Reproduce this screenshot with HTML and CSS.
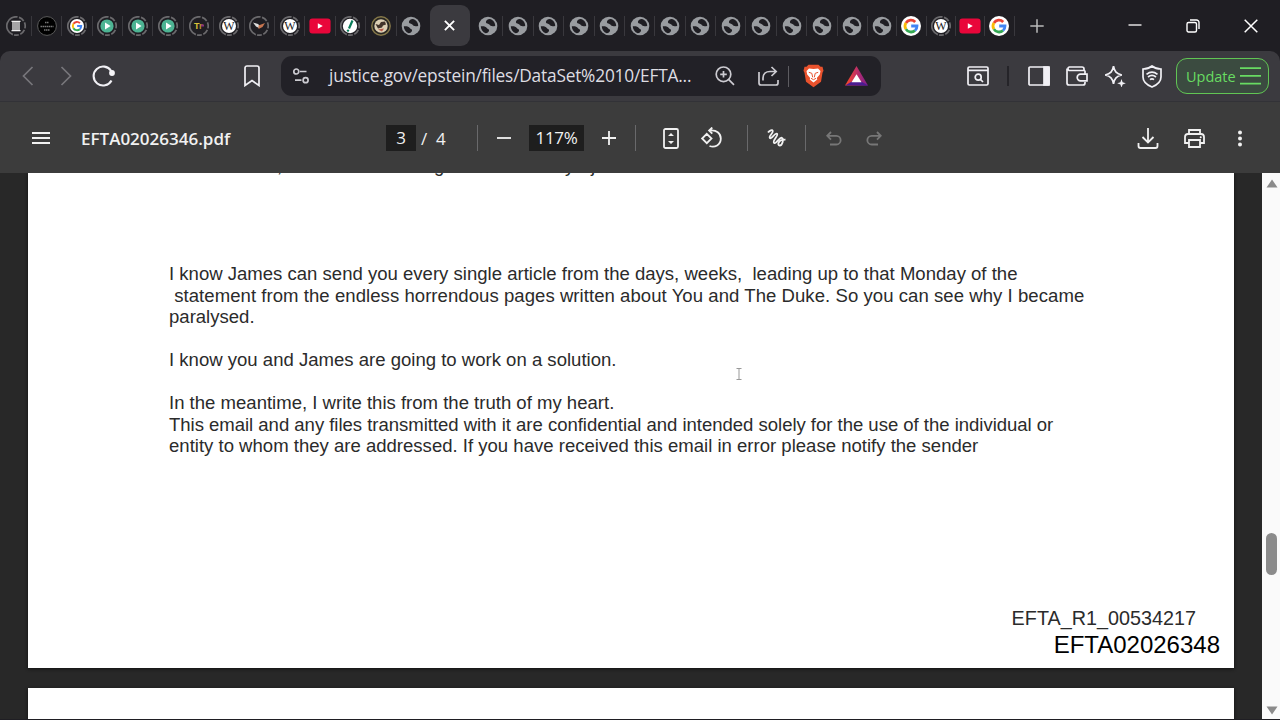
FILE: index.html
```html
<!DOCTYPE html>
<html lang="en">
<head>
    <meta charset="utf-8">
    <title>EFTA02026346.pdf</title>
    <link rel="stylesheet" href="styles.css">
</head>
<body>

<!-- shared favicons -->
<svg class="defs" width="0" height="0">
    <defs>
        <linearGradient id="bat" x1="0" y1="0" x2="1" y2="0"><stop offset="0" stop-color="#ff4b20"/><stop offset=".45" stop-color="#c8325f"/><stop offset="1" stop-color="#7a1d93"/></linearGradient>
    </defs>
    <symbol id="globe" viewBox="0 0 20 20">
        <circle cx="10" cy="10" r="9.3" fill="#999ca0"/>
        <path d="M2.800 10.300c3-.4 5 .3 6 1.700.9 1.300 2.700.9 2.200 2.700-.4 1.400-1.600 2.300-3.300 2.600C4.800 16.300 2.800 13.500 2.800 10.300zM11.700 3c-2 .1-3.200 1.300-3.700 2.500-.5 1.600 1 2 2.500 2.400 1.500.6 1.500 1.900 3 2.200 1.500.3 2.200-.2 3.700-.2C17.200 6.200 14.700 3.500 11.700 3z" fill="#1f1e23"/>
    </symbol>
    <symbol id="ring" viewBox="0 0 20 20">
        <circle cx="10" cy="10" r="9.2" fill="none" stroke="#6b6a6d" stroke-width="1.700" stroke-dasharray="27 1.600 6 1.600 6 1.600 6 1.600 4.800 1.600" transform="rotate(110 10 10)"/>
    </symbol>
    <symbol id="google" viewBox="0 0 20 20">
        <circle cx="10" cy="10" r="10" fill="#fff"/>
        <g fill="none" stroke-width="2.800">
            <path d="M14.200 5.900A6 6 0 0 0 4.900 6.900" stroke="#ea4335"/>
            <path d="M4.900 6.900a6 6 0 0 0 0 6.200" stroke="#fbbc05"/>
            <path d="M4.900 13.100a6 6 0 0 0 9.100 1.400" stroke="#34a853"/>
            <path d="M14 14.500A6 6 0 0 0 16 10H10.200" stroke="#4285f4"/>
        </g>
    </symbol>
    <symbol id="play" viewBox="0 0 20 20">
        <use href="#ring"/><circle cx="10" cy="10" r="6.600" fill="#4db493"/><path d="M8 6.600v6.800l5.600-3.400z" fill="#fff"/>
    </symbol>
    <symbol id="youtube" viewBox="0 0 22 20">
        <rect x=".4" y="2.500" width="21.200" height="15" rx="3" fill="#e9063a"/><path d="M8.800 7.200v5.600l5-2.800z" fill="#fff"/>
    </symbol>
</svg>

<div class="tabs">
    <div class="tab"><svg viewBox="0 0 20 20"><use href="#ring"/><path d="M5.500 5.300h9M5.500 14.700h9M7 6v8.500M9 6v8.500M11 6v8.500M13 6v8.500" stroke="#eee" stroke-width="1.300"/></svg></div>
    <div class="tab"><svg viewBox="0 0 20 20"><circle cx="10" cy="10" r="9.400" fill="#000" stroke="#5b5b5b"/><path d="M3.500 10.500h13M8 6.500h4M7 14h6" stroke="#777" stroke-width="1.500" stroke-dasharray="1.500 .5"/></svg></div>
    <div class="tab"><svg viewBox="0 0 20 20"><use href="#ring"/><use href="#google" x="3" y="3" width="14" height="14"/></svg></div>
    <div class="tab"><svg><use href="#play"/></svg></div>
    <div class="tab"><svg><use href="#play"/></svg></div>
    <div class="tab"><svg><use href="#play"/></svg></div>
    <div class="tab"><svg viewBox="0 0 20 20"><use href="#ring"/><text x="5" y="13" class="tr">T<tspan fill="#b99532">r</tspan></text><path d="M12 9.500h3" stroke="#8b337c" stroke-width="2"/></svg></div>
    <div class="tab"><svg viewBox="0 0 20 20"><use href="#ring"/><circle cx="10" cy="10" r="7" fill="#fff"/><text x="10" y="13.800" text-anchor="middle" class="wiki-w">W</text></svg></div>
    <div class="tab"><svg viewBox="0 0 20 20"><use href="#ring"/><path d="M4 6.500l5 1.500 2 2-1 2-3-1.500z" fill="#ddd"/><path d="M9.500 9.500L16 7l-2.500 4-4 2z" fill="#c7754f"/></svg></div>
    <div class="tab"><svg viewBox="0 0 20 20"><use href="#ring"/><circle cx="10" cy="10" r="7" fill="#fff"/><text x="10" y="13.800" text-anchor="middle" class="wiki-w">W</text></svg></div>
    <div class="tab"><svg class="yt"><use href="#youtube"/></svg></div>
    <div class="tab"><svg viewBox="0 0 20 20"><use href="#ring"/><circle cx="10" cy="10" r="7.200" fill="#fff"/><path d="M12.500 4.500L9 12.500" stroke="#087c59" stroke-width="2.200"/><circle cx="8" cy="14.600" r="1.200" fill="#087c59"/></svg></div>
    <div class="tab"><svg viewBox="0 0 20 20"><circle cx="10" cy="10" r="9.200" fill="#292722" stroke="#86794a" stroke-width="1.400"/><circle cx="10" cy="10" r="6.700" fill="#ddd0b5"/><path d="M4.500 8l3.500 1 2-3 4-.5 1 3-3 1-1 2-4 1z" fill="#42342b"/><path d="M7 13.500l6-1-2 3z" fill="#b85b48"/></svg></div>
    <div class="tab last"><svg><use href="#globe"/></svg></div>
    <div class="tab-active"><svg viewBox="0 0 10 10"><path d="M.8.8l8.400 8.400M9.200.8L.8 9.200" stroke="#fff" stroke-width="1.700"/></svg></div>
    <div class="tab"><svg><use href="#globe"/></svg></div>
    <div class="tab"><svg><use href="#globe"/></svg></div>
    <div class="tab"><svg><use href="#globe"/></svg></div>
    <div class="tab"><svg><use href="#globe"/></svg></div>
    <div class="tab"><svg><use href="#globe"/></svg></div>
    <div class="tab"><svg><use href="#globe"/></svg></div>
    <div class="tab"><svg><use href="#globe"/></svg></div>
    <div class="tab"><svg><use href="#globe"/></svg></div>
    <div class="tab"><svg><use href="#globe"/></svg></div>
    <div class="tab"><svg><use href="#globe"/></svg></div>
    <div class="tab"><svg><use href="#globe"/></svg></div>
    <div class="tab"><svg><use href="#globe"/></svg></div>
    <div class="tab"><svg><use href="#globe"/></svg></div>
    <div class="tab narrow"><svg><use href="#globe"/></svg></div>
    <div class="tab narrow"><svg><use href="#google"/></svg></div>
    <div class="tab narrow"><svg viewBox="0 0 20 20"><use href="#ring"/><circle cx="10" cy="10" r="7" fill="#fff"/><text x="10" y="13.800" text-anchor="middle" class="wiki-w">W</text></svg></div>
    <div class="tab narrow"><svg class="yt"><use href="#youtube"/></svg></div>
    <div class="tab narrow"><svg><use href="#google"/></svg></div>
    <svg class="newtab" viewBox="0 0 14 14"><path d="M7 .3v13.400M.3 7h13.400" stroke="#bbb" stroke-width="1.500"/></svg>
    <div class="window">
        <svg viewBox="0 0 14 14"><path d="M.5 6h13" stroke="#fff" stroke-width="1.300"/></svg>
        <svg viewBox="0 0 14 14" fill="none" stroke="#fff" stroke-width="1.400"><rect x="1" y="3.500" width="9.500" height="9.500" rx="1.500"/><path d="M4 1h6.500A2.500 2.500 0 0 1 13 3.500V10"/></svg>
        <svg viewBox="0 0 14 14"><path d="M.7.7l12.600 12.600M13.300.7L.7 13.300" stroke="#fff" stroke-width="1.500"/></svg>
    </div>
</div>

<div class="navbar">
    <div class="nav-buttons">
        <svg class="dim" width="12" height="20" viewBox="0 0 12 20"><path d="M10.500 1L1.500 10l9 9"/></svg>
        <svg class="dim" width="12" height="20" viewBox="0 0 12 20"><path d="M1.500 1l9 9-9 9"/></svg>
        <svg class="reload" width="24" height="22" viewBox="0 0 24 22"><path d="M19.200 6A9.500 9.500 0 1 0 19.500 15.500" stroke-width="2.100"/><circle cx="20" cy="8" r="2.900" fill="#f5f4f8" stroke="none"/></svg>
    </div>
    <svg class="bookmark" width="16" height="22" viewBox="0 0 16 22"><path d="M1 3a2 2 0 0 1 2-2h10a2 2 0 0 1 2 2v17.500l-7-5-7 5z"/></svg>
    <div class="address">
        <svg width="16" height="16" viewBox="0 0 16 16"><circle cx="3.300" cy="3.500" r="2.500"/><path d="M7 3.500h6.500M2 12.200h6.500"/><circle cx="12.600" cy="12.200" r="2.500"/></svg>
        <span class="url">justice.gov/epstein/files/DataSet%2010/EFTA...</span>
        <svg class="zoomicon" width="20" height="20" viewBox="0 0 20 20"><circle cx="8.500" cy="8.300" r="7.300"/><path d="M13.800 13.600L19 18.800M8.500 5v6.600M5.200 8.300h6.600"/></svg>
        <svg class="share" width="21" height="20" viewBox="0 0 21 20"><path d="M1 6v11a2 2 0 0 0 2 2h15a2 2 0 0 0 2-2v-3M5 14.500V12c0-4 3-6.500 7-6.500h6M13.500 1l4.700 4.500-4.700 4.500"/></svg>
        <i></i>
        <svg class="brave" width="21" height="24" viewBox="0 0 21 24"><path d="M5.500.8h10l2 2 2-.1 1 4-1 2-1.500 9-7.500 5.500-7.500-5.500-1.500-9-1-2 1-4 2 .1z" fill="#e9522d" stroke="none"/><path d="M6 4.500l4.500.5L15 4.500l2.500 2.500-.7 3.500-3 3.500.5 1.500-3.800 3-3.800-3 .5-1.500-3-3.500L3.500 7z" fill="#fff" stroke="none"/><path d="M5.800 8.300l3 1 .9 4M15.200 8.300l-3 1-.9 4M8 14.300l2.500 1.400 2.500-1.400" stroke="#e9522d" stroke-width="1"/></svg>
        <svg width="23" height="20" viewBox="0 0 23 20"><path d="M11.500 0L23 19.500H0z" fill="url(#bat)" stroke="none"/><path d="M0 19.500L6.500 15.800h10.300L23 19.500z" fill="#4c1c91" stroke="none"/><path d="M11.500 8.200l5 8h-10z" fill="#fff" stroke="none"/></svg>
    </div>
    <div class="actions">
        <svg width="22" height="20" viewBox="0 0 22 20"><rect x="1" y="1" width="20" height="18" rx="1.300"/><path d="M1 4.300h20M13.500 13.500l2.500 2.500"/><circle cx="11.200" cy="11.200" r="3"/></svg>
        <i></i>
        <svg width="22" height="20" viewBox="0 0 22 20"><rect x="1" y="1" width="20" height="18" rx="1"/><path d="M16 1h5v18h-5z" fill="#f1f0f5"/></svg>
        <svg width="22" height="20" viewBox="0 0 22 20"><path d="M3 1h13a2 2 0 0 1 2 2v1.500M19 4.500H3a2 2 0 0 1 0-3.500M1 2.500V17a2 2 0 0 0 2 2h14a2 2 0 0 0 2-2v-1M21 8.200v6.600h-6.500a3.300 3.300 0 0 1 0-6.600zM19 4.500v3.700"/></svg>
        <svg width="22" height="22" viewBox="0 0 22 22"><path d="M9.500 1.200c1 5.500 2.900 7.500 8.300 8.800-5.400 1.300-7.300 3.300-8.300 8.800C8.500 13.300 6.600 11.300 1.200 10 6.600 8.700 8.500 6.700 9.500 1.200z"/><path d="M17.500 14l1.100 3.200 3.200 1.100-3.200 1.100-1.100 3.200-1.100-3.200-3.200-1.100 3.200-1.100z" fill="#f1f0f5" stroke="none"/></svg>
        <svg width="20" height="23" viewBox="0 0 20 23"><path d="M10 1c2.500 2 5.500 3 9 3v8c0 5-4 8-9 10-5-2-9-5-9-10V4c3.500 0 6.500-1 9-3zM4.500 9.300c3.500-2.700 7.500-2.700 11 0M6 12c2.600-2 5.400-2 8 0M8 14.600c1.300-1 2.700-1 4 0"/></svg>
    </div>
    <div class="update"><span>Update</span><svg width="21" height="18" viewBox="0 0 21 18"><path d="M0 1.200h21M0 8.900h21M0 16.600h21"/></svg></div>
</div>

<div class="pdfbar">
    <svg class="menu" width="18" height="12" viewBox="0 0 18 12"><path d="M0 1h18M0 6h18M0 11h18"/></svg>
    <span class="filename">EFTA02026346.pdf</span>
    <span class="field page-no">3</span>
    <span class="slash">/</span>
    <span class="total">4</span>
    <i class="d1"></i>
    <svg class="minus" width="14" height="14" viewBox="0 0 14 14"><path d="M0 7h14"/></svg>
    <span class="field percent">117%</span>
    <svg class="plus" width="14" height="14" viewBox="0 0 14 14"><path d="M0 7h14M7 0v14"/></svg>
    <i class="d2"></i>
    <svg class="fit" width="16" height="21" viewBox="0 0 16 21"><rect x="1" y="1" width="14" height="19" rx="1.500"/><path d="M5 8l3-3 3 3zM5 13l3 3 3-3z" fill="#f1f1f1" stroke="none"/></svg>
    <svg class="rotate" width="22" height="22" viewBox="0 0 22 22"><path d="M6.800 6.800L11.500 11.500l-4.700 4.700L2.100 11.500zM9.500 3.500c7-1.200 11.300 3 11.300 8 0 6.300-6 9.600-11.300 7.500M12.300.5l-3.200 3 3.200 3.200"/></svg>
    <i class="d3"></i>
    <svg class="draw" width="19" height="18" viewBox="0 0 19 18"><path d="M1 3.600C2.500 1.500 5.500 0 5.800 2.200S1.300 7.500 2.900 9 8 3.300 10 4.800 5 12 7 13.800 12.500 8 14.800 8.800 15.500 16.500 12.700 16.500 11 10.500 18.500 10.700"/></svg>
    <i class="d4"></i>
    <svg class="off undo" width="16" height="15" viewBox="0 0 16 15"><path d="M5 1L1.200 4.800 5 8.600M1.500 4.800h8.800a4.300 4.300 0 0 1 0 8.700H4"/></svg>
    <svg class="off" width="16" height="15" viewBox="0 0 16 15"><path d="M11 1l3.800 3.800L11 8.600M14.500 4.800H5.700a4.300 4.300 0 0 0 0 8.700H12"/></svg>
    <div class="pdf-actions">
        <svg width="22" height="21" viewBox="0 0 22 21"><path d="M11 0v14M5.500 9l5.500 5.500L16.500 9M1.500 15v3a2 2 0 0 0 2 2h15a2 2 0 0 0 2-2v-3"/></svg>
        <svg width="21" height="19" viewBox="0 0 21 19"><path d="M5 5V1h11v4M5 14H1V8a3 3 0 0 1 3-3h13a3 3 0 0 1 3 3v6h-4M5 11h11v7H5z"/><circle cx="16.700" cy="8.300" r="1" fill="#fff" stroke="none"/></svg>
        <svg width="6" height="17" viewBox="0 0 6 17" class="dots"><circle cx="3" cy="2.500" r="2"/><circle cx="3" cy="8.500" r="2"/><circle cx="3" cy="14.500" r="2"/></svg>
    </div>
</div>

<div class="viewer">
    <div class="pages">
        <div class="page">
            <!-- descenders of the line scrolled under the toolbar -->
            <div class="scrolled"><span>,</span><span>g</span><span>y</span><span>j</span></div>
            <div class="mail">
                <p>I know James can send you every single article from the days, weeks,  leading up to that Monday of the
<span class="wide"> statement from the endless horrendous pages written about You and The Duke. So you can see why I became</span>
paralysed.</p>
                <p>I know you and James are going to work on a solution.</p>
                <p>In the meantime, I write this from the truth of my heart.
<span class="tight">This email and any files transmitted with it are confidential and intended solely for the use of the individual or</span>
entity to whom they are addressed. If you have received this email in error please notify the sender</p>
            </div>
            <svg class="cursor" width="6" height="12" viewBox="0 0 6 12"><path d="M.5.5h5M3 .5v11M.5 11.500h5"/></svg>
            <div class="stamps">
                <div class="stamp-old">EFTA_R1_00534217</div>
                <div class="stamp">EFTA02026348</div>
            </div>
        </div>
        <div class="page next"></div>
    </div>
    <div class="scrollbar">
        <svg width="12" height="9" viewBox="0 0 12 9"><path d="M6 0.500L11.500 8.500H.5z" fill="#8b8b8b"/></svg>
        <div class="thumb"></div>
        <svg width="12" height="9" viewBox="0 0 12 9"><path d="M6 8.500L.5.5h11z" fill="#8b8b8b"/></svg>
    </div>
</div>

</body>
</html>
```
FILE: styles.css
```css
*{
    box-sizing: border-box;
}

body{
    margin: 0;
    width: 1280px;
    height: 720px;
    overflow: hidden;
    display: flex;
    flex-direction: column;
    background: #1f1e23;
    color: #f1f1f1;
    font-family: "Open Sans", "Noto Sans", sans-serif;
}

svg{
    flex: none;
    display: block;
}

.defs{
    position: absolute;
}

.wiki-w{
    font: 12px "Liberation Serif", serif;
    fill: #222;
}

.tr{
    font: bold 9px "Liberation Sans", sans-serif;
    fill: #d8c338;
}

/* tab strip */
.tabs{
    height: 51px;
    flex: none;
    display: flex;
    align-items: center;
    padding-left: 1.5px;
}

.tab{
    width: 30.4px;
    height: 20px;
    flex: none;
    display: flex;
    justify-content: center;
    border-right: 1px solid #39383d;
}

.tab.narrow{
    width: 29.3px;
}

.tab.last{
    border-color: transparent;
}

.tab svg{
    width: 20px;
    height: 20px;
}

.tab .yt{
    width: 22px;
}

.tab-active{
    width: 40px;
    height: 41px;
    margin: 0 3px 0 3px;
    flex: none;
    border-radius: 9px;
    background: #3b3a3f;
    display: flex;
    align-items: center;
    justify-content: center;
}

.tab-active svg{
    width: 11px;
    height: 11px;
}

.newtab{
    width: 14px;
    height: 14px;
    margin-left: 15px;
}

.window{
    margin-left: auto;
    padding-right: 22px;
    display: flex;
    gap: 44px;
}

.window svg{
    width: 14px;
    height: 14px;
}

/* navigation */
.navbar{
    height: 51px;
    flex: none;
    display: flex;
    align-items: center;
    background: #3b3a3f;
    border-bottom: 1px solid #323237;
    border-radius: 10px 10px 0 0;
    padding-left: 22px;
}

.navbar svg{
    fill: none;
    stroke: #f1f0f5;
    stroke-width: 1.7;
}

.nav-buttons{
    display: flex;
    align-items: center;
    gap: 26px;
}

.nav-buttons .dim{
    stroke: #77767b;
}

.nav-buttons .reload{
    margin-left: -6px;
}

.bookmark{
    margin-left: 128px;
}

.address{
    width: 600px;
    height: 40px;
    margin-left: 21px;
    padding-left: 12px;
    display: flex;
    align-items: center;
    background: #222127;
    border-radius: 11px;
}

.address svg{
    stroke: #cccbd1;
}

.url{
    width: 366px;
    margin-left: 20px;
    white-space: nowrap;
    font-size: 17.3px;
    letter-spacing: -.2px;
    line-height: 24px;
    color: #dedde2;
}

.share{
    margin-left: 23px;
}

.zoomicon{
    margin-left: 20px;
}

.address i{
    width: 1px;
    height: 21px;
    margin-left: 9px;
    background: #5d5c61;
}

.brave{
    margin: 0 21px 0 14px;
}

.actions{
    display: flex;
    align-items: center;
    margin-left: 86px;
    gap: 16px;
}

.actions i{
    width: 2px;
    height: 20px;
    margin: 0 3px 0 2px;
    background: #252429;
}

.update{
    width: 93px;
    height: 36px;
    margin-left: 14px;
    padding-left: 9px;
    display: flex;
    align-items: center;
    gap: 4px;
    border: 1.5px solid #61c554;
    border-radius: 11px;
    background: #3b4b40;
    color: #68dc62;
    font-size: 14.5px;
}

.update svg{
    stroke: #68dc62;
}

/* pdf toolbar */
.pdfbar{
    height: 71px;
    flex: none;
    display: flex;
    align-items: center;
    padding: 1px 37px 0 32px;
    background: #3c3c3c;
    font-size: 17px;
}

.pdfbar svg{
    fill: none;
    stroke: #f1f1f1;
    stroke-width: 1.8;
}

.pdfbar i{
    width: 1px;
    height: 26px;
    background: #69696b;
}

.filename{
    width: 305px;
    margin-left: 31px;
    font-weight: 600;
}

.field{
    height: 26px;
    line-height: 26px;
    text-align: center;
    background: #1e1e1e;
}

.page-no{
    width: 30px;
}

.slash{
    width: 20px;
    padding-left: 5px;
}

.total{
    width: 12px;
}

.d1{
    margin-left: 29px;
}

.minus{
    margin: 0 18px 0 19px;
}

.percent{
    width: 55px;
    letter-spacing: -.3px;
}

.plus{
    margin-left: 18px;
}

.d2{
    margin-left: 19px;
}

.fit{
    margin-left: 27px;
}

.rotate{
    margin-left: 21px;
}

.d3{
    margin-left: 25px;
}

.draw{
    margin-left: 19px;
}

.d4{
    margin-left: 19px;
}

.undo{
    margin: 0 24px 0 20px;
}

.pdfbar .off{
    stroke: #777;
}

.pdf-actions{
    display: flex;
    align-items: center;
    gap: 25px;
    margin-left: auto;
}

.pdfbar .dots{
    fill: #f1f1f1;
    stroke: none;
    margin-left: 7px;
}

/* document */
.viewer{
    height: 546px;
    flex: none;
    display: flex;
    overflow: hidden;
    background: #282828;
}

.pages{
    width: 1206px;
    margin-left: 28px;
    display: flex;
    flex-direction: column;
    gap: 20px;
}

.page{
    height: 495px;
    flex: none;
    position: relative;
    display: flex;
    flex-direction: column;
    padding: 0 14px 9px 141px;
    background: #fff;
    color: #2b2b2b;
    font-family: "Liberation Sans", Arial, sans-serif;
    box-shadow: 0 1px 3px #111;
}

.page.next{
    height: 31px;
    padding: 0;
}

.scrolled{
    height: 22px;
    margin: -18px 0 86px 108px;
    display: flex;
    font-size: 18.5px;
    line-height: 22px;
}

.scrolled span{
    width: 26px;
}

.scrolled span:first-child{
    width: 157px;
}

.scrolled span:nth-child(2){
    width: 131px;
}

.mail p{
    margin: 0 0 21.5px;
    font-size: 18.56px;
    line-height: 21.5px;
    white-space: pre;
}

.mail .wide{
    letter-spacing: .05px;
}

.mail .tight{
    letter-spacing: -.03px;
}

.cursor{
    position: absolute;
    left: 708px;
    top: 195px;
    fill: none;
    stroke: #999;
}

.stamps{
    display: flex;
    flex-direction: column;
    align-items: flex-end;
    margin-top: auto;
}

.stamp-old{
    margin-right: 24px;
    font-size: 19.8px;
    line-height: 26px;
}

.stamp{
    font-size: 24px;
    line-height: 28px;
    color: #000;
}

.scrollbar{
    width: 18px;
    margin-left: auto;
    padding: 6px 3px 4px 4px;
    display: flex;
    flex-direction: column;
    background: #fafafa;
}

.thumb{
    width: 11px;
    height: 42px;
    margin: 345px 0 auto;
    border-radius: 6px;
    background: #8b8b8b;
}
```
